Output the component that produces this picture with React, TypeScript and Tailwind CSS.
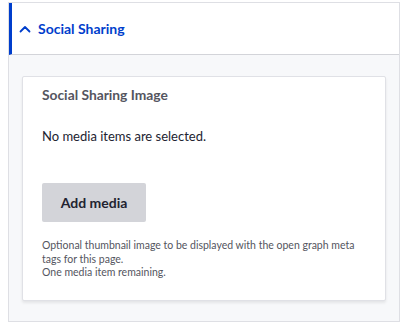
import React from "react";

export default function App() {
  return (
    <div className="min-h-screen bg-white pl-2 pr-[6px] pt-[2px]" style={{ fontFamily: 'Lato, "Noto Sans", sans-serif' }}>
      <div className="border-t border-r border-b border-[#dedfe4] border-l border-l-[#dedfe4]">
        {/* Summary */}
        <div className="flex h-[52px] items-center gap-[7px] border-l-[3px] border-[#003ecc] border-b border-b-[#d3d4d9] bg-white pl-[7px]">
          <svg width="12" height="12" viewBox="0 0 12 12" fill="none" className="text-[#003ecc]">
            <path d="M1.5 8.5 L6 4 L10.5 8.5" stroke="currentColor" strokeWidth="1.8" strokeLinecap="round" strokeLinejoin="round" />
          </svg>
          <span className="text-[14px] font-bold text-[#003ecc]">Social Sharing</span>
        </div>

        {/* Body */}
        <div className="bg-[#f7f8fa] px-[13px] pt-[21px] pb-[20px]">
          <div className="rounded-[2px] border border-[#e0e1e6] bg-white px-[19px] pt-[8px] pb-[20px] shadow-[0_2px_3px_rgba(0,0,0,0.08)]">
            <div className="text-[13.8px] font-bold leading-[20px] text-[#545560]">Social Sharing Image</div>
            <p className="mt-[21px] text-[13px] leading-[20px] text-[#222330]">No media items are selected.</p>
            <button className="mt-[37px] h-[39px] w-[104px] rounded-[2px] bg-[#d3d4d9] text-[14px] font-bold text-[#222330]">
              Add media
            </button>
            <div className="mt-[17px] text-[10.5px] leading-[13.5px] text-[#545560]">
              <p>Optional thumbnail image to be displayed with the open graph meta tags for this page.</p>
              <p>One media item remaining.</p>
            </div>
          </div>
        </div>
      </div>
    </div>
  );
}
